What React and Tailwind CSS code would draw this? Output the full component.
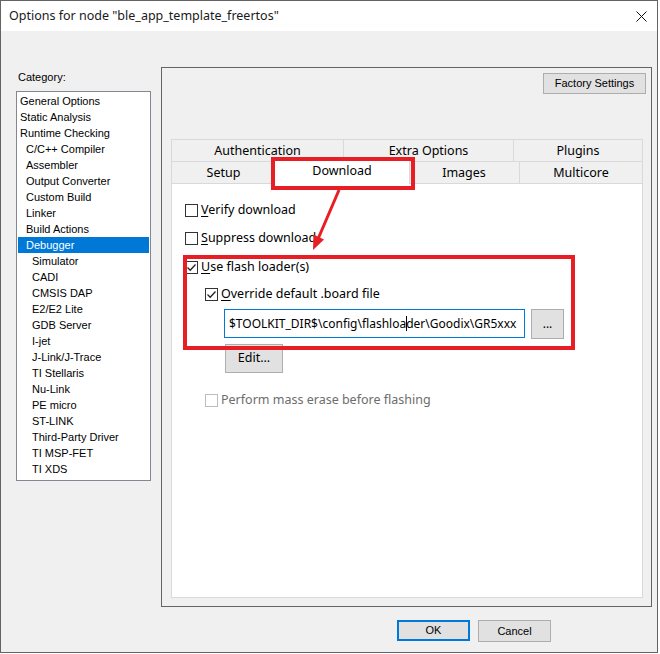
import React from "react";

const categories = [
  { name: "General Options", level: 0 },
  { name: "Static Analysis", level: 0 },
  { name: "Runtime Checking", level: 0 },
  { name: "C/C++ Compiler", level: 1 },
  { name: "Assembler", level: 1 },
  { name: "Output Converter", level: 1 },
  { name: "Custom Build", level: 1 },
  { name: "Linker", level: 1 },
  { name: "Build Actions", level: 1 },
  { name: "Debugger", level: 1, selected: true },
  { name: "Simulator", level: 2 },
  { name: "CADI", level: 2 },
  { name: "CMSIS DAP", level: 2 },
  { name: "E2/E2 Lite", level: 2 },
  { name: "GDB Server", level: 2 },
  { name: "I-jet", level: 2 },
  { name: "J-Link/J-Trace", level: 2 },
  { name: "TI Stellaris", level: 2 },
  { name: "Nu-Link", level: 2 },
  { name: "PE micro", level: 2 },
  { name: "ST-LINK", level: 2 },
  { name: "Third-Party Driver", level: 2 },
  { name: "TI MSP-FET", level: 2 },
  { name: "TI XDS", level: 2 },
];

const indent = ["pl-[2px]", "pl-[8px]", "pl-[14px]"];

// small win32-style checkbox
function CheckBox({ checked, disabled, label, accel }) {
  return (
    <div className="flex items-center h-[16px] gap-[3px]">
      <span
        className={`w-[13px] h-[13px] border bg-white flex items-center justify-center ${
          disabled ? "border-[#bcbcbc]" : "border-[#333333]"
        }`}
      >
        {checked && (
          <svg width="11" height="11" viewBox="0 0 11 11">
            <path d="M1.5 5.5 L4.2 8.2 L9.5 2.5" fill="none" stroke="#222" strokeWidth="1.3" />
          </svg>
        )}
      </span>
      <span className={`text-[12.5px] leading-[16px] ${disabled ? "text-[#6d6d6d]" : "text-black"}`}>
        {accel ? (
          <>
            <span className="underline underline-offset-2">{label[0]}</span>
            {label.slice(1)}
          </>
        ) : (
          label
        )}
      </span>
    </div>
  );
}

function Tab({ label, width, selected, last }) {
  return (
    <div
      className={`relative h-[22px] border-t border-l border-[#d9d9d9] flex items-center justify-center text-[12.5px] pt-px ${
        last ? "border-r" : ""
      } ${width}`}
    >
      {selected ? (
        <div className="absolute -left-[2px] -right-[2px] -top-[3px] -bottom-[1px] bg-white border-t border-l border-r border-[#d9d9d9] flex items-center justify-center z-10 pb-[2px]">
          {label}
        </div>
      ) : (
        label
      )}
    </div>
  );
}

export default function App() {
  return (
    <div className="relative w-[660px] h-[654px] bg-white font-['Noto_Sans',sans-serif] text-black">
      <div className="w-[658px] h-[653px] border border-[#646464] flex flex-col">
        {/* title bar */}
        <div className="h-[30px] bg-white flex items-center justify-between pl-[8px] pr-[9px]">
          <span className="text-[12.5px] text-[#1a1a1a]">Options for node "ble_app_template_freertos"</span>
          <svg width="11" height="11" viewBox="0 0 11 11" className="mr-[1px]">
            <path d="M0.5 0.5 L10.5 10.5 M10.5 0.5 L0.5 10.5" stroke="#111" strokeWidth="1" />
          </svg>
        </div>

        <div className="flex-1 bg-[#f0f0f0] flex flex-col">
          <div className="flex">
            {/* category list */}
            <div className="ml-[15px] w-[135px] font-['Liberation_Sans',sans-serif] text-[11px]">
              <div className="mt-[38px] h-[16px] leading-[16px] pl-[2px]">Category:</div>
              <div className="mt-[6px] h-[390px] bg-white border border-[#828790] pt-[1px] px-px">
                {categories.map((c) => (
                  <div
                    key={c.name}
                    className={`h-[16px] leading-[16px] ${indent[c.level]} ${
                      c.selected ? "bg-[#0078d7] text-white" : ""
                    }`}
                  >
                    {c.name}
                  </div>
                ))}
              </div>
            </div>

            {/* option page */}
            <div className="ml-[10px] mt-[36px] w-[491px] h-[540px] border border-[#646464] flex flex-col">
              <div className="flex justify-end pr-[5px] pt-[5px]">
                <button className="w-[103px] h-[21px] bg-[#e1e1e1] border border-[#adadad] font-['Liberation_Sans',sans-serif] text-[11px]">
                  Factory Settings
                </button>
              </div>

              <div className="ml-[9px] mt-[45px] w-[472px]">
                <div className="flex">
                  <Tab label="Authentication" width="w-[172px]" />
                  <Tab label="Extra Options" width="w-[170px]" />
                  <Tab label="Plugins" width="w-[130px]" last />
                </div>
                <div className="flex">
                  <Tab label="Setup" width="w-[104px]" />
                  <Tab label="Download" width="w-[133px]" selected />
                  <Tab label="Images" width="w-[111px]" />
                  <Tab label="Multicore" width="w-[124px]" last />
                </div>

                <div className="h-[415px] bg-white border border-[#d9d9d9] pl-[13px] flex flex-col">
                  <div className="mt-[18px]">
                    <CheckBox label="Verify download" accel />
                  </div>
                  <div className="mt-[12px]">
                    <CheckBox label="Suppress download" accel />
                  </div>
                  <div className="mt-[13px]">
                    <CheckBox label="Use flash loader(s)" accel checked />
                  </div>
                  <div className="mt-[11px] ml-[20px]">
                    <CheckBox label="Override default .board file" accel checked />
                  </div>
                  <div className="mt-[7px] ml-[39px] flex items-start gap-[6px]">
                    <div className="w-[301px] h-[29px] border border-[#0078d7] bg-white overflow-hidden whitespace-nowrap pl-[4px] text-[12px] leading-[27px]">
                      $TOOLKIT_DIR$\config\flashloa
                      <span className="inline-block w-px h-[15px] bg-black align-[-3px] -mr-px" />
                      der\Goodix\GR5xxx
                    </div>
                    <button className="w-[33px] h-[30px] bg-[#e1e1e1] border border-[#adadad] text-[12px] leading-[20px]">
                      ...
                    </button>
                  </div>
                  <div className="mt-[5px] ml-[40px]">
                    <button className="w-[58px] h-[29px] bg-[#e1e1e1] border border-[#adadad] text-[12.5px]">
                      Edit...
                    </button>
                  </div>
                  <div className="mt-[19px] ml-[20px]">
                    <CheckBox label="Perform mass erase before flashing" disabled />
                  </div>
                </div>
              </div>
            </div>
          </div>

          {/* dialog buttons */}
          <div className="mt-[13px] flex justify-end gap-[8px] pr-[106px] font-['Liberation_Sans',sans-serif] text-[11px]">
            <button className="w-[73px] h-[21px] bg-[#e1e1e1] border-2 border-[#0078d7]">OK</button>
            <button className="w-[73px] h-[22px] bg-[#e1e1e1] border border-[#adadad]">Cancel</button>
          </div>
        </div>
      </div>

      {/* red callout boxes and arrow */}
      <div className="absolute left-[271px] top-[157px] w-[144px] h-[33px] border-4 border-[#e81e25] z-20" />
      <div className="absolute left-[183px] top-[255px] w-[392px] h-[95px] border-4 border-[#e81e25] z-20" />
      <svg className="absolute left-0 top-0 z-20" width="660" height="654">
        <line x1="339" y1="190" x2="318" y2="239" stroke="#e81e25" strokeWidth="3" />
        <polygon points="313,250 313.5,234.5 324,239.5" fill="#e81e25" />
      </svg>
    </div>
  );
}
